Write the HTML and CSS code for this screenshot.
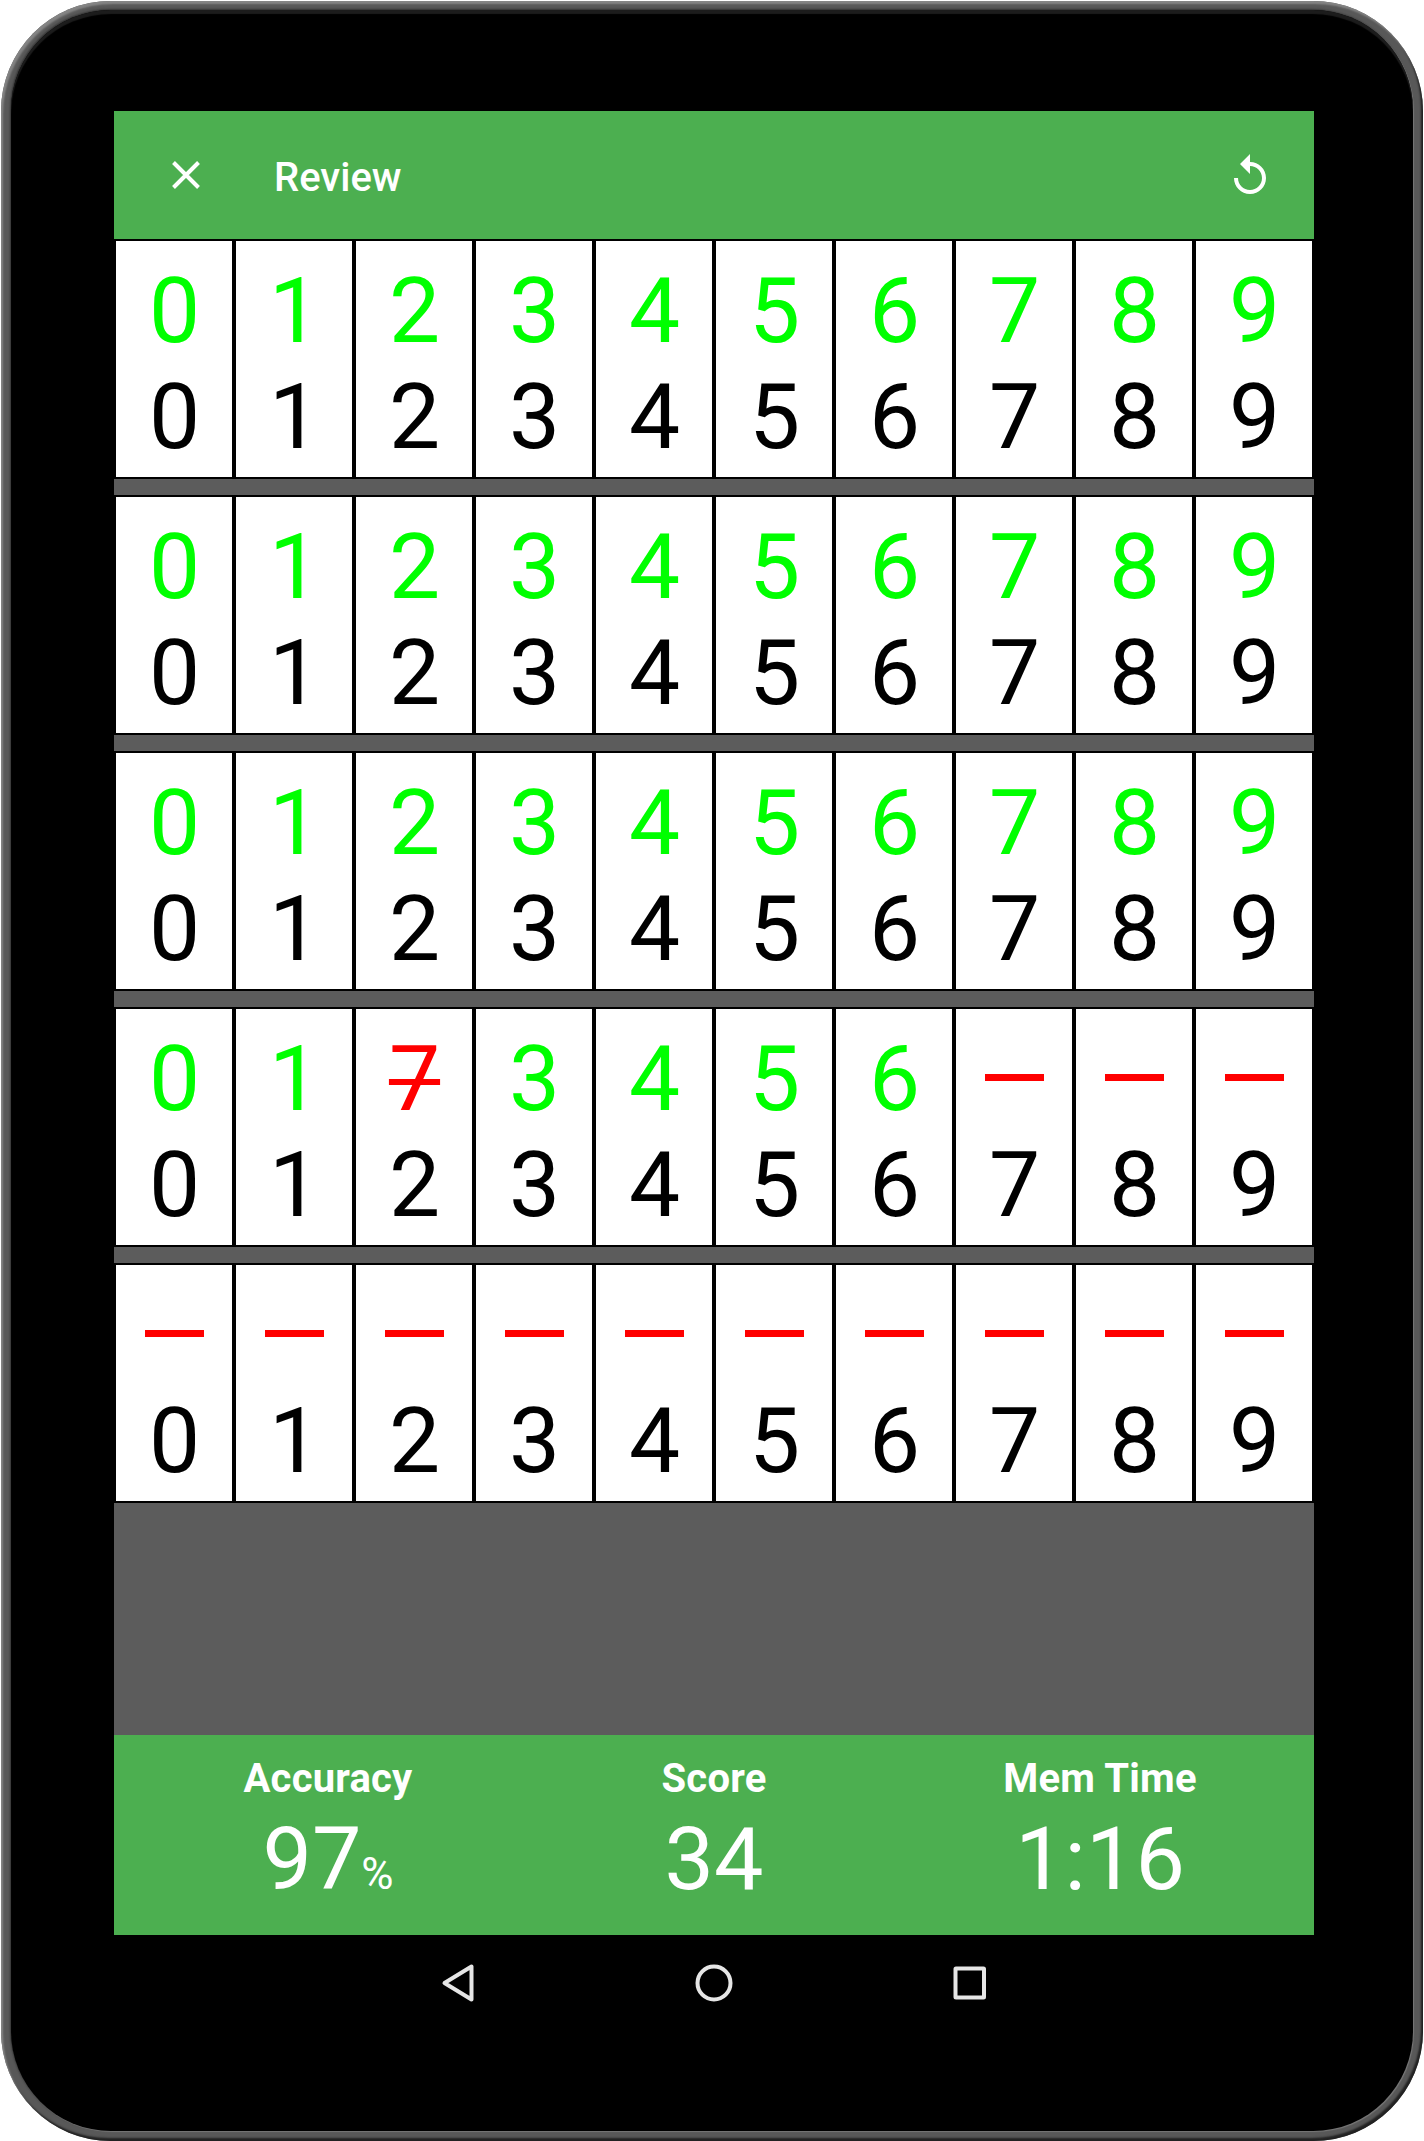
FILE: index.html
```html
<!DOCTYPE html>
<html lang="en">
<head>
<meta charset="utf-8">
<title>Review</title>
<link rel="stylesheet" href="styles.css">
</head>
<body>
<div class="bezel">
<div class="device">
  <main class="screen">
    <header class="toolbar">
      <svg class="close" viewBox="0 0 28 28" aria-hidden="true"><path d="M1.5 1.5l25 25M26.5 1.5l-25 25"/></svg>
      <h1 class="title">Review</h1>
      <svg class="replay" viewBox="4 1 16 20" aria-hidden="true"><path d="M12 5V1L7 6l5 5V7c3.310 0 6 2.690 6 6s-2.690 6-6 6-6-2.690-6-6H4c0 4.420 3.580 8 8 8s8-3.580 8-8-3.580-8-8-8z"/></svg>
    </header>
    <div class="rows" id="rows"></div>
    <footer class="stats">
      <div class="stat"><div class="label">Accuracy</div><div class="value">97<span class="unit">%</span></div></div>
      <div class="stat"><div class="label">Score</div><div class="value">34</div></div>
      <div class="stat"><div class="label">Mem Time</div><div class="value">1:16</div></div>
    </footer>
  </main>
  <nav class="navbar">
    <svg viewBox="0 0 40 40"><path d="M6.500 20L33.500 3.500v33z"/></svg>
    <svg viewBox="0 0 40 40"><circle cx="20" cy="20" r="16.500"/></svg>
    <svg viewBox="0 0 40 40"><rect x="5.500" y="5.500" width="28.500" height="29" rx=".5"/></svg>
  </nav>
</div>
</div>
<script src="review.js"></script>
</body>
</html>
```
FILE: styles.css
```css
* { box-sizing: border-box; }

body {
  margin: 0;
  background: #fff;
  font-family: Roboto, "Liberation Sans", sans-serif;
}

.bezel {
  width: 1422px;
  height: 2140px;
  margin: 1px 0 0 1px;
  padding: 9px 10px 10px;
  border-radius: 110px;
  background: #585858;
  box-shadow: inset 2px 3px 2px #858585, inset -2px -3px 2px #222;
}

.device {
  height: 100%;
  padding: 101px 102px 0 103px;
  display: flex;
  flex-direction: column;
  border-radius: 100px;
  background: #000;
  box-shadow: inset 0 4px 1px #1c1c1c, 1px 1px 1px #777, -1px -1px 2px #333;
}

.screen {
  width: 1200px;
  height: 1824px;
  flex: none;
  display: flex;
  flex-direction: column;
  background: #5c5c5c;
}

.toolbar {
  height: 128px;
  flex: none;
  display: flex;
  align-items: center;
  padding: 0 48px 0 58px;
  background: #4caf50;
  color: #fff;
}

.close { width: 28px; height: 28px; stroke: #fff; stroke-width: 4; }
.title { flex: 1; margin: 6px 0 0 74px; font-size: 40px; line-height: 48px; font-weight: 500; }
.replay { width: 32px; height: 40px; margin-bottom: 2px; fill: #fff; }

.rows { flex: 1; display: flex; flex-direction: column; gap: 16px; }
.row { height: 240px; display: grid; grid-template-columns: repeat(10, 120px); }
.cell {
  border: 2px solid #000;
  padding: 17px 0 0 1px;
  background: #fff;
  text-align: center;
  font-size: 91px;
  line-height: 106px;
}
.right { color: #0f0; }
.wrong { color: #f00; text-decoration: line-through; text-decoration-thickness: 6px; }
.missed { height: 106px; display: flex; justify-content: center; padding-top: 48px; }
.missed::before { content: ""; width: 59px; height: 7px; background: #f00; }

.stats {
  height: 200px;
  flex: none;
  display: grid;
  grid-template-columns: repeat(3, 1fr);
  padding: 20px 21px 0;
  background: #4caf50;
  color: #fff;
  text-align: center;
}
.label { font-size: 40px; line-height: 48px; font-weight: 700; letter-spacing: .2px; }
.value { margin-top: 3px; font-size: 88px; line-height: 106px; }
.unit { font-size: 44px; }

.navbar { height: 96px; display: flex; justify-content: center; gap: 216px; align-items: center; padding-left: 2px; }
.navbar svg { width: 40px; height: 40px; fill: none; stroke: #e6e6e6; stroke-width: 4; stroke-linejoin: round; }
```
FILE: review.js
```js
// Recalled digits for each row; "-" marks a digit that was not recalled.
const recalled = ["0123456789", "0123456789", "0123456789", "0173456---", "----------"];
const answers = "0123456789";

const rows = document.getElementById("rows");
for (const guess of recalled) {
  const row = document.createElement("div");
  row.className = "row";
  [...answers].forEach((answer, i) => {
    const cell = document.createElement("div");
    cell.className = "cell";
    const top = document.createElement("div");
    if (guess[i] === "-") {
      top.className = "missed";
    } else {
      top.className = guess[i] === answer ? "right" : "wrong";
      top.textContent = guess[i];
    }
    const bottom = document.createElement("div");
    bottom.textContent = answer;
    cell.append(top, bottom);
    row.append(cell);
  });
  rows.append(row);
}
```
